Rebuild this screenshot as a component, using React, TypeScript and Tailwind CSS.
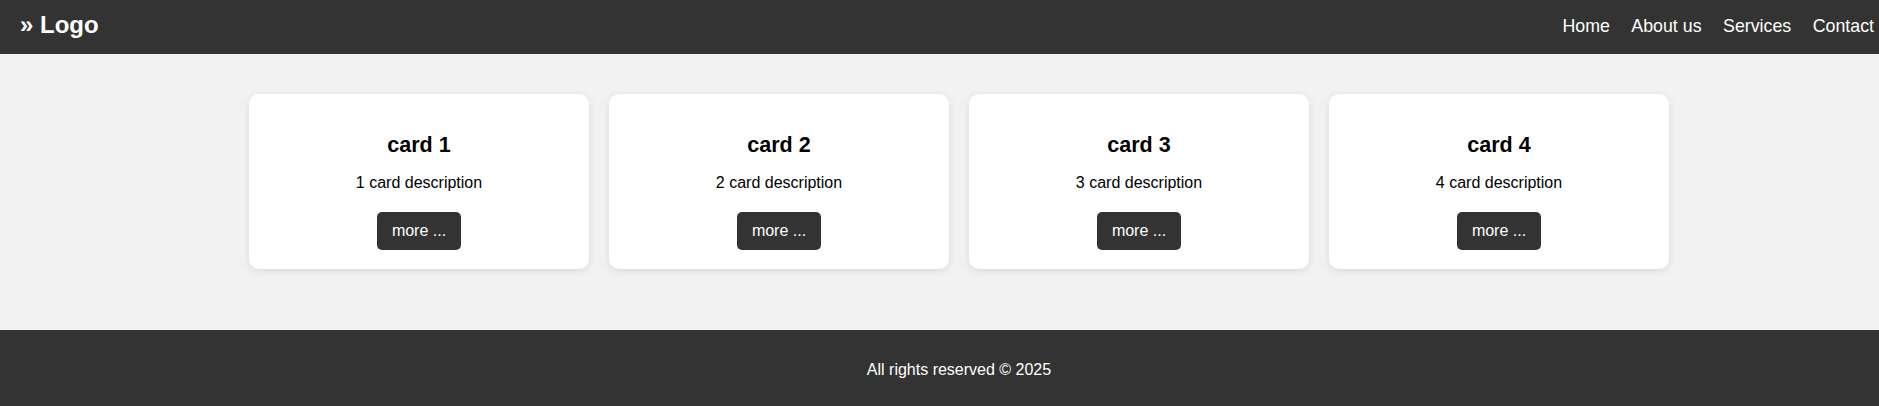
import React from "react";

const cards = [1, 2, 3, 4];
const links = ["Home", "About us", "Services", "Contact"];

function App() {
  return (
    <div className="w-screen overflow-hidden font-['Liberation_Sans',Arial,sans-serif]">
      {/* page is laid out a bit wider than the window, like the original */}
      <div className="w-[1918px] bg-[#f2f2f2]">
        <header className="flex h-[54px] items-center justify-between bg-[#333333] pl-[20px] pr-[44px] text-white">
          <div className="text-[24px] font-bold leading-[28px] -mt-[4px]">» Logo</div>
          <nav className="flex gap-[21.5px] -mt-[3px]">
            {links.map((link) => (
              <a key={link} href="#" className="text-[17.8px] leading-[20px] text-white">
                {link}
              </a>
            ))}
          </nav>
        </header>

        <main className="flex justify-center gap-[20px] pt-[40px] pb-[61px]">
          {cards.map((n) => (
            <div
              key={n}
              className="flex w-[340px] flex-col items-center rounded-[10px] bg-white pt-[39px] pb-[19px] text-center text-black shadow-[0_2px_8px_rgba(0,0,0,0.1)]"
            >
              <h3 className="text-[21.5px] font-bold leading-[25px]">card {n}</h3>
              <p className="mt-[16px] text-[16px] leading-[18px]">{n} card description</p>
              <button className="mt-[20px] rounded-[5px] bg-[#333333] px-[15px] py-[10px] text-[16px] leading-[18px] text-white">
                more ...
              </button>
            </div>
          ))}
        </main>

        <footer className="bg-[#333333] pt-[31px] pb-[29px] text-center text-[16px] leading-[18px] text-white">
          All rights reserved © 2025
        </footer>
      </div>
    </div>
  );
}

export default App;
